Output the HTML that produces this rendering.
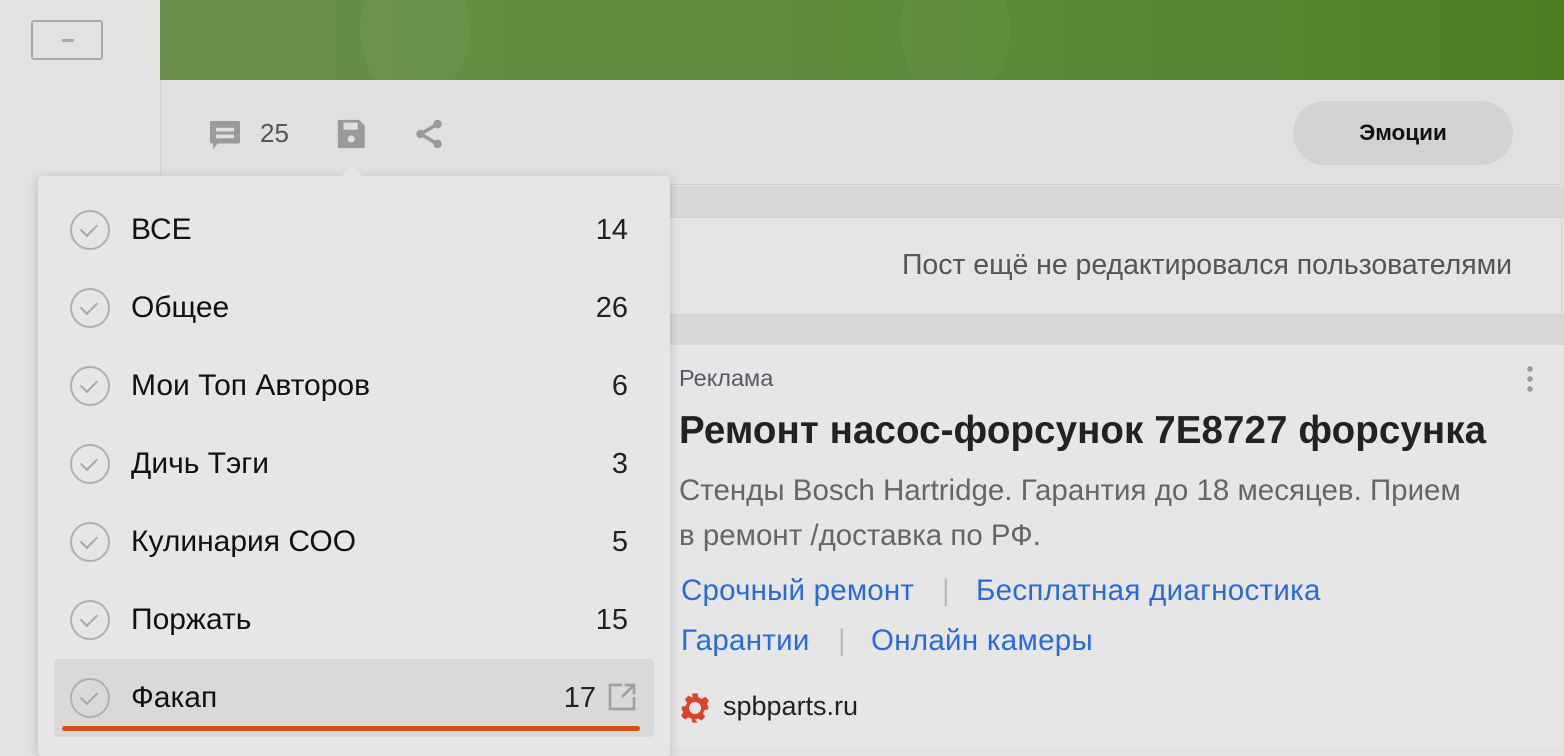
<!DOCTYPE html>
<html><head><meta charset="utf-8"><style>
*{margin:0;padding:0;box-sizing:border-box}
body{width:1564px;height:748px;overflow:hidden;background:#e2e2e2;font-family:"Liberation Sans",sans-serif;position:relative}
.abs{position:absolute}
.banner{left:160px;top:0;width:1404px;height:80px;background:linear-gradient(90deg,#6a8f4a,#5d8a3a 60%,#4f7e25);}
.bar{left:160px;top:80px;width:1402px;height:105px;background:#e0e0e2;border-left:1px solid #d2d2d2;border-bottom:1px solid #d2d2d2;border-right:1px solid #d2d2d2}
.gap{left:160px;width:1404px;background:#d8d8d8}
.card2{left:160px;top:217px;width:1402px;height:98px;background:#e5e5e5;border:1px solid #d2d2d2;border-radius:2px}
.ad{left:160px;top:345px;width:1404px;height:403px;background:#e6e6e6}
.pop{left:38px;top:176px;width:632px;height:580px;background:#e6e6e6;border-radius:4px;box-shadow:0 2px 10px rgba(0,0,0,.18)}
.item{left:54px;width:600px;height:78px}
.item .c{position:absolute;left:16px;top:19px;width:40px;height:40px;border:2px solid #b0b0b0;border-radius:50%}
.item .c:after{content:"";position:absolute;left:12px;top:8px;width:8px;height:14px;border-right:2px solid #a8a8a8;border-bottom:2px solid #a8a8a8;transform:rotate(45deg)}
.item .t{position:absolute;left:77px;top:22px;font-size:30px;color:#111;letter-spacing:0px}
.item .n{position:absolute;right:26px;top:23px;font-size:29px;color:#222}
.lk{font-size:29.5px;color:#2a6ad8;letter-spacing:0.2px}
.sep{font-size:29.5px;color:#bbb}
</style></head><body>
<div class="abs" style="left:31px;top:20px;width:72px;height:40px;border:2px solid #aaa;border-radius:3px"><div class="abs" style="left:29px;top:17px;width:12px;height:3px;background:#aaa"></div></div>
<div class="abs banner"></div>
<div class="abs" style="left:360px;top:-40px;width:110px;height:140px;border-radius:50%;background:rgba(255,255,255,.035)"></div>
<div class="abs" style="left:900px;top:-40px;width:110px;height:140px;border-radius:50%;background:rgba(255,255,255,.035)"></div>
<div class="abs bar"></div>
<svg class="abs" style="left:207px;top:118px" width="36" height="36" viewBox="0 0 24 24"><path fill="#9a9a9a" d="M3 2h18a1 1 0 0 1 1 1v13a1 1 0 0 1-1 1H7l-3 4v-4H3a1 1 0 0 1-1-1V3a1 1 0 0 1 1-1z"/><rect x="6" y="6.5" width="12" height="2.5" fill="#e0e0e2"/><rect x="6" y="11" width="12" height="2.5" fill="#e0e0e2"/></svg>
<div class="abs" style="left:260px;top:118px;font-size:26px;color:#555">25</div>
<svg class="abs" style="left:335px;top:117px" width="34" height="34" viewBox="0 0 24 24"><path fill="#9a9a9a" d="M3 2h14l4 4v15a1 1 0 0 1-1 1H3a1 1 0 0 1-1-1V3a1 1 0 0 1 1-1z"/><rect x="6" y="4" width="10" height="5" fill="#e0e0e2"/><circle cx="11.5" cy="15.5" r="2.5" fill="#e0e0e2"/></svg>
<svg class="abs" style="left:412px;top:117px" width="34" height="34" viewBox="0 0 24 24"><g fill="#9a9a9a"><circle cx="18" cy="5" r="3"/><circle cx="6" cy="12" r="3"/><circle cx="18" cy="19" r="3"/></g><path d="M18 5L6 12l12 7" stroke="#9a9a9a" stroke-width="2.5" fill="none"/></svg>
<div class="abs" style="left:1293px;top:101px;width:220px;height:64px;border-radius:32px;background:#d2d2d2;text-align:center;line-height:64px;font-size:22.5px;font-weight:bold;color:#111">Эмоции</div>
<div class="abs gap" style="top:186px;height:31px"></div>
<div class="abs card2"></div>
<div class="abs" style="right:52px;top:249px;font-size:28.5px;color:#555;letter-spacing:-0.05px">Пост ещё не редактировался пользователями</div>
<div class="abs gap" style="top:315px;height:30px"></div>
<div class="abs ad"></div>
<div class="abs" style="left:679px;top:365px;font-size:23.5px;color:#555b66">Реклама</div>
<div class="abs" style="left:1527px;top:364px;width:6px;height:30px;background:radial-gradient(circle,#999 2.5px,transparent 3px) 0 0/6px 10px"></div>
<div class="abs" style="left:679px;top:409px;font-size:38.5px;font-weight:bold;color:#222;letter-spacing:0.1px">Ремонт насос-форсунок 7E8727 форсунка</div>
<div class="abs" style="left:679px;top:468px;font-size:29.5px;line-height:45px;color:#666;letter-spacing:0px">Стенды Bosch Hartridge. Гарантия до 18 месяцев. Прием<br>в ремонт /доставка по РФ.</div>
<div class="abs lk" style="left:681px;top:574px">Срочный ремонт</div>
<div class="abs sep" style="left:942px;top:574px">|</div>
<div class="abs lk" style="left:976px;top:574px;letter-spacing:0.3px">Бесплатная диагностика</div>
<div class="abs lk" style="left:681px;top:624px;letter-spacing:0.3px">Гарантии</div>
<div class="abs sep" style="left:838px;top:624px">|</div>
<div class="abs lk" style="left:871px;top:624px;letter-spacing:0.3px">Онлайн камеры</div>
<svg class="abs" style="left:679px;top:692px" width="32" height="32" viewBox="0 0 24 24"><path fill="#d9452c" d="M10 1h4l.6 3 2.4 1.2 2.6-1.6 2.8 2.8-1.6 2.6L22 11v2l-3 .6-1 2.4 1.6 2.6-2.8 2.8-2.6-1.6-2.2 1L14 23h-4l-.6-3-2.4-1-2.6 1.6-2.8-2.8L3.2 15 2 13v-2l3-.6 1-2.4-1.6-2.6 2.8-2.8 2.6 1.6L10 4z"/><circle cx="12" cy="12" r="4.5" fill="#e6e6e6"/></svg>
<div class="abs" style="left:723px;top:691px;font-size:27px;color:#222">spbparts.ru</div>
<div class="abs pop"></div>
<div class="abs" style="left:341px;top:166px;width:0;height:0;border-left:11px solid transparent;border-right:11px solid transparent;border-bottom:11px solid #e6e6e6"></div>
<div class="abs item" style="top:191px"><div class="c"></div><div class="t">ВСЕ</div><div class="n">14</div></div>
<div class="abs item" style="top:269px"><div class="c"></div><div class="t">Общее</div><div class="n">26</div></div>
<div class="abs item" style="top:347px"><div class="c"></div><div class="t">Мои Топ Авторов</div><div class="n">6</div></div>
<div class="abs item" style="top:425px"><div class="c"></div><div class="t">Дичь Тэги</div><div class="n">3</div></div>
<div class="abs item" style="top:503px"><div class="c"></div><div class="t">Кулинария СОО</div><div class="n">5</div></div>
<div class="abs item" style="top:581px"><div class="c"></div><div class="t">Поржать</div><div class="n">15</div></div>
<div class="abs item" style="top:659px;background:#d9d9d9;border-radius:4px"><div class="c"></div><div class="t">Факап</div><div class="n" style="right:58px">17</div>
<svg class="abs" style="left:552px;top:22px" width="32" height="32" viewBox="0 0 24 24"><path d="M12 3H3v18h18v-9" stroke="#a0a0a0" stroke-width="2" fill="none"/><path d="M21 3l-9 9M14 3h7v7" stroke="#a0a0a0" stroke-width="2" fill="none"/></svg>
<div class="abs" style="left:8px;top:67px;width:578px;height:5px;border-radius:3px;background:#d84c24"></div></div>
</body></html>
